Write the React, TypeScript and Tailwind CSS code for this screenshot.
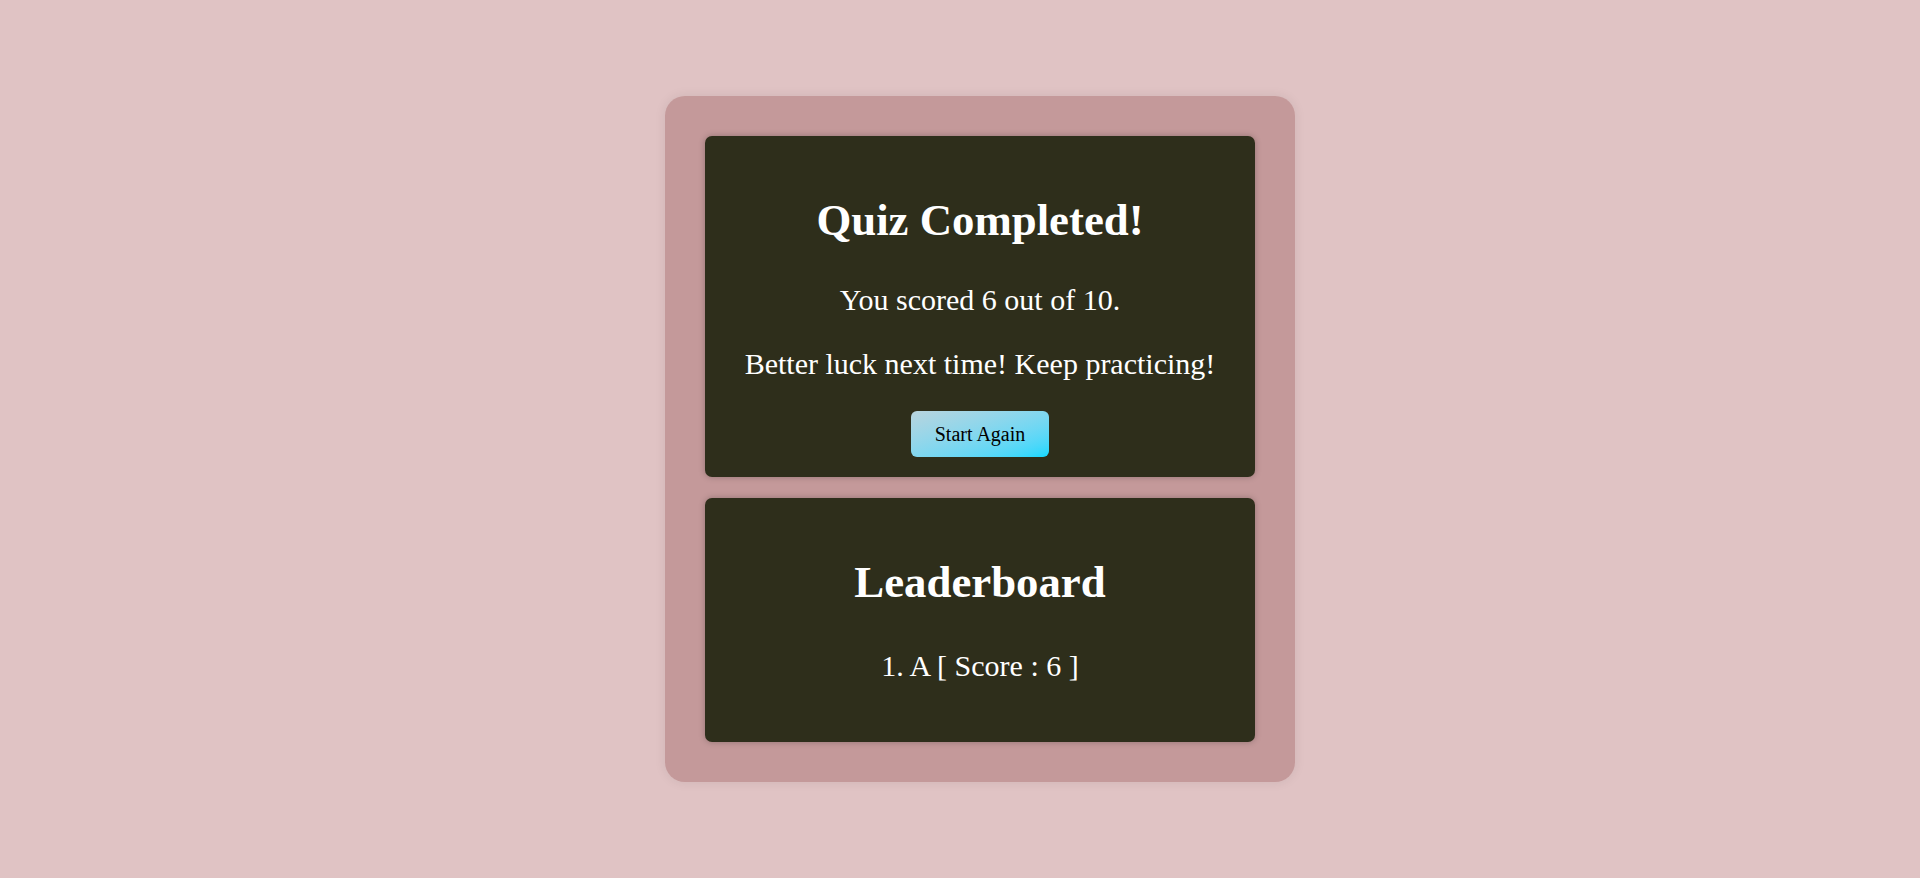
export default function App() {
  return (
    <div
      className="min-h-screen w-full bg-[#e0c3c4] flex items-center justify-center pl-[40px]"
      style={{ fontFamily: '"Liberation Serif", "Times New Roman", serif' }}
    >
      <div className="w-[630px] rounded-[20px] bg-[#c4999a] p-[40px] flex flex-col gap-[21px] shadow-[0_0_12px_rgba(0,0,0,0.08)]">
        <div className="rounded-[7px] bg-[#2e2e1b] flex flex-col items-center pt-[58px] pb-[20px] text-white shadow-[0_0_6px_rgba(0,0,0,0.25)]">
          <h1 className="text-[44.8px] leading-[52px] font-bold">Quiz Completed!</h1>
          <p className="mt-[37px] text-[30px] leading-[33px]">You scored 6 out of 10.</p>
          <p className="mt-[31px] text-[30px] leading-[33px]">Better luck next time! Keep practicing!</p>
          <button className="mt-[31px] h-[46px] w-[138px] rounded-[6px] bg-linear-to-br from-[#b8d4de] to-[#00d8ff] text-[20px] text-black">
            Start Again
          </button>
        </div>
        <div className="rounded-[7px] bg-[#2e2e1b] flex flex-col items-center pt-[58px] pb-[60px] text-white shadow-[0_0_6px_rgba(0,0,0,0.25)]">
          <h1 className="text-[44.8px] leading-[52px] font-bold">Leaderboard</h1>
          <p className="mt-[41px] text-[30px] leading-[33px]">1. A [ Score : 6 ]</p>
        </div>
      </div>
    </div>
  );
}
